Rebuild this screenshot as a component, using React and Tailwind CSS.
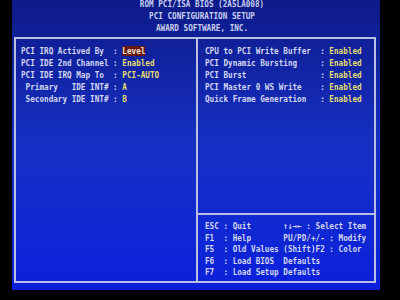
import React from 'react';

const mono = "font-['DejaVu_Sans_Mono','Liberation_Mono',monospace] font-bold text-[9px]";

const leftRows = [
  ['PCI IRQ Actived By  : ', 'Level', true],
  ['PCI IDE 2nd Channel : ', 'Enabled'],
  ['PCI IDE IRQ Map To  : ', 'PCI-AUTO'],
  [' Primary   IDE INT# : ', 'A'],
  [' Secondary IDE INT# : ', 'B'],
];

const rightRows = [
  ['CPU to PCI Write Buffer  : ', 'Enabled'],
  ['PCI Dynamic Bursting     : ', 'Enabled'],
  ['PCI Burst                : ', 'Enabled'],
  ['PCI Master 0 WS Write    : ', 'Enabled'],
  ['Quick Frame Generation   : ', 'Enabled'],
];

const helpRows = [
  'ESC : Quit       ↑↓→← : Select Item',
  'F1  : Help       PU/PD/+/- : Modify',
  'F5  : Old Values (Shift)F2 : Color',
  'F6  : Load BIOS  Defaults',
  'F7  : Load Setup Defaults',
];

// one text row of the BIOS screen, squeezed to the 4.6px character cell
function Row({ children, className = '' }) {
  return (
    <div className={`h-[11.8px] leading-[11.8px] whitespace-pre origin-left scale-x-[0.85] ${className}`}>
      {children}
    </div>
  );
}

export default function App() {
  return (
    <div className={`w-[400px] h-[300px] bg-black flex ${mono}`}>
      <div className="ml-[12px] w-[368px] h-[290px] flex flex-col bg-linear-to-b from-[#0d1a88] via-[#1630c4] to-[#0b1fdc]">
        {/* title lines */}
        <div className="-mt-[1px] text-[#c9cfee] text-center">
          <div className="h-[11.8px] leading-[11.8px] whitespace-pre scale-x-[0.85] translate-x-[6px]">ROM PCI/ISA BIOS (2A5LA008)</div>
          <div className="h-[11.8px] leading-[11.8px] whitespace-pre scale-x-[0.85] translate-x-[6px]">PCI CONFIGURATION SETUP</div>
          <div className="h-[11.8px] leading-[11.8px] whitespace-pre scale-x-[0.85] translate-x-[6px]">AWARD SOFTWARE, INC.</div>
        </div>

        {/* setup box */}
        <div className="mt-[3px] ml-[2px] w-[362px] h-[246px] border-2 border-[#b9c0e2] flex overflow-hidden">
          <div className="w-[180px] shrink-0 pt-[7px] pl-[5px]">
            {leftRows.map(([label, value, sel]) => (
              <Row key={label} className="text-[#d3d7ef]">
                {label}
                <span className={sel ? 'bg-[#6a1812] text-[#f2ead8]' : 'text-[#e6de6e]'}>{value}</span>
              </Row>
            ))}
          </div>

          <div className="flex-1 min-w-0 flex flex-col border-l-2 border-[#b9c0e2]">
            <div className="flex-1 pt-[7px] pl-[6.5px]">
              {rightRows.map(([label, value]) => (
                <Row key={label} className="text-[#d3d7ef]">
                  {label}
                  <span className="text-[#e6de6e]">{value}</span>
                </Row>
              ))}
            </div>
            <div className="h-[68px] border-t-2 border-[#b9c0e2] pt-[6px] pl-[6.5px] text-[#d3d7ef]">
              {helpRows.map((line) => (
                <div key={line} className="h-[11.5px] leading-[11.5px] whitespace-pre origin-left scale-x-[0.85]">
                  {line}
                </div>
              ))}
            </div>
          </div>
        </div>
      </div>
    </div>
  );
}
